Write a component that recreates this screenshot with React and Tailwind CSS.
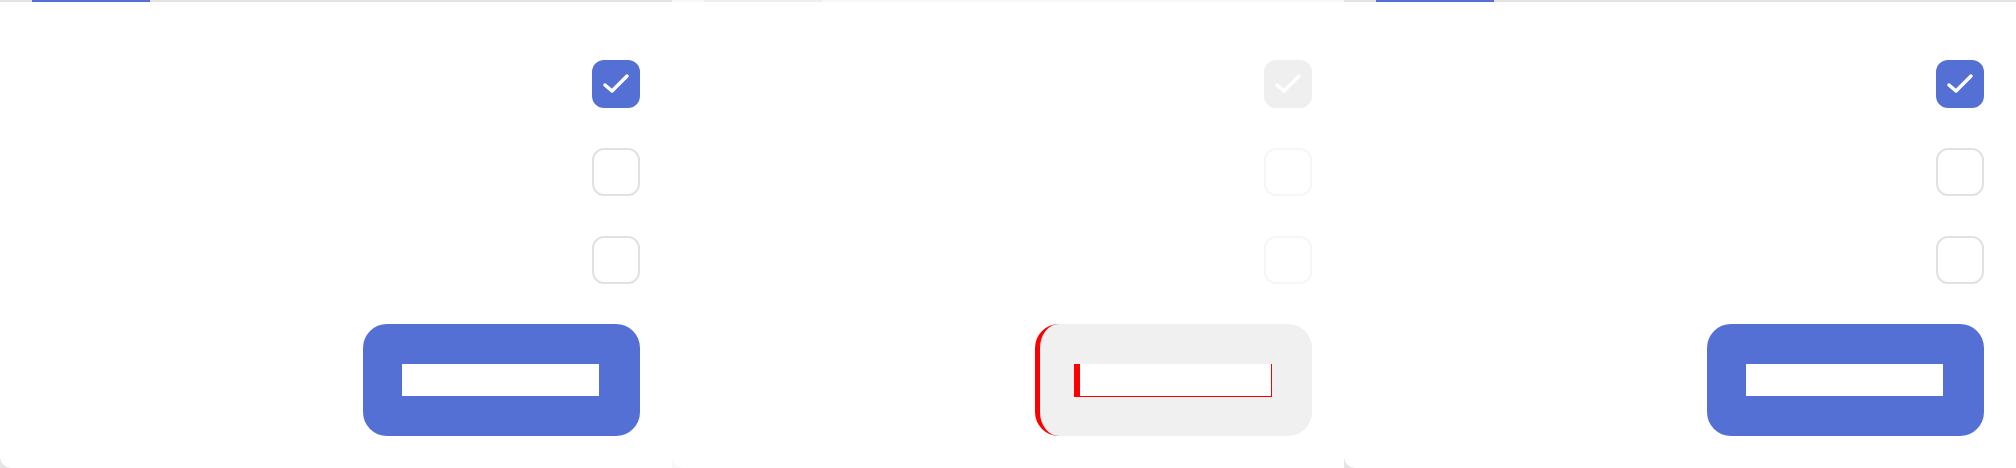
import React from 'react';

const Check = ({ color = '#ffffff' }) => (
  <svg viewBox="0 0 48 48" className="w-[48px] h-[48px]">
    <polyline
      points="13,25 20,31 35,16"
      fill="none"
      stroke={color}
      strokeWidth="3.5"
      strokeLinecap="round"
      strokeLinejoin="round"
    />
  </svg>
);

const Panel = ({ faded }) => {
  return (
    <div className={`w-[672px] h-full flex flex-col ${faded ? 'bg-[#f9f9f9]' : 'bg-[#e6e6e6]'}`}>
      {/* Tab track */}
      <div className={`h-[2px] pl-[32px] flex ${faded ? 'bg-[#f8f8f8]' : 'bg-[#e2e2e2]'}`}>
        <div className={`w-[118px] h-full ${faded ? 'bg-[#eeeeee]' : 'bg-[#5470d4]'}`} />
      </div>

      {/* Card */}
      <div className="flex-1 bg-white rounded-bl-xl flex flex-col items-end pr-[32px] pt-[58px] gap-[40px]">
        <div className={`w-[48px] h-[48px] rounded-xl ${faded ? 'bg-[#efefef]' : 'bg-[#5470d4]'}`}>
          <Check />
        </div>
        <div className={`w-[48px] h-[48px] rounded-xl border-2 ${faded ? 'border-[#f6f6f6]' : 'border-[#e2e2e2]'}`} />
        <div className={`w-[48px] h-[48px] rounded-xl border-2 ${faded ? 'border-[#f6f6f6]' : 'border-[#e2e2e2]'}`} />

        {faded ? (
          <button className="w-[277px] h-[112px] rounded-3xl bg-[#f0f0f0] border-l-[5px] border-[#ff0000] flex items-center pl-[34px]">
            <span className="w-[198px] h-[33px] bg-white border-l-[6px] border-b border-r border-[#ff0000] block" />
          </button>
        ) : (
          <button className="w-[277px] h-[112px] rounded-3xl bg-[#5470d4] flex items-center pl-[39px]">
            <span className="w-[197px] h-[32px] bg-white block" />
          </button>
        )}
      </div>
    </div>
  );
};

export default function App() {
  return (
    <div className="w-[2016px] h-[468px] flex bg-[#e6e6e6] overflow-hidden">
      <Panel />
      <Panel faded />
      <Panel />
    </div>
  );
}
